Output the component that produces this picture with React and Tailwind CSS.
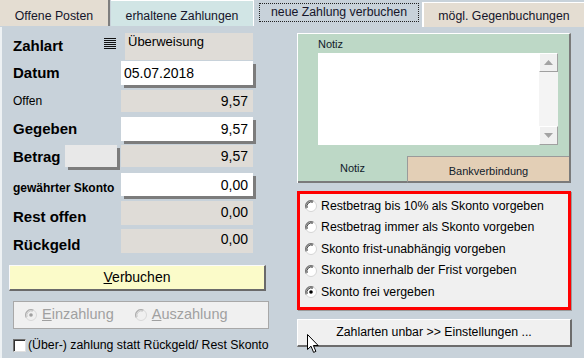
import React from 'react';

const RadioDot = ({ checked, disabled }) => (
  <svg width="12" height="12" viewBox="0 0 12 12" className="shrink-0">
    <circle cx="6" cy="6" r="5.5" fill={disabled ? '#f0f0f0' : '#ffffff'} stroke={disabled ? '#d8d8d8' : '#d4d4d4'} strokeWidth="1" />
    <path d="M1.2 8.4 A5.4 5.4 0 0 1 8.4 1.2" stroke={disabled ? '#b0b0b0' : '#7a7a7a'} strokeWidth="1.2" fill="none" />
    <path d="M2.2 7.8 A4.3 4.3 0 0 1 7.8 2.2" stroke={disabled ? '#c8c8c8' : '#303030'} strokeWidth="1" fill="none" />
    {checked && <circle cx="6" cy="6" r="1.8" fill={disabled ? '#a0a0a0' : '#000000'} />}
  </svg>
);

const ListIcon = () => (
  <svg width="12" height="12" viewBox="0 0 12 12">
    {[0.5, 2.5, 4.5, 6.5, 8.5, 10.5].map((y) => (
      <line key={y} x1="0" y1={y} x2="12" y2={y} stroke="#111" strokeWidth="1" />
    ))}
  </svg>
);

const Cursor = () => (
  <svg width="13" height="20" viewBox="0 0 13 20" className="absolute left-[307px] top-[334px]">
    <path d="M0.5 0.5 L0.5 15.5 L4 12.2 L6.6 18.4 L8.9 17.4 L6.4 11.5 L11.2 11.5 Z" fill="#fff" stroke="#000" strokeWidth="1" strokeLinejoin="round" />
  </svg>
);

const Value = ({ white, children, className = '' }) => (
  <div
    className={
      (white ? 'bg-white shadow-[3px_3px_0_#7c7c7c] ' : 'bg-[#dfdcd7] ') +
      'w-[132px] text-[14px] leading-[16px] text-black ' +
      className
    }
  >
    {children}
  </div>
);

const skontoOptions = [
  'Restbetrag bis 10% als Skonto vorgeben',
  'Restbetrag immer als Skonto vorgeben',
  'Skonto frist-unabhängig vorgeben',
  'Skonto innerhalb der Frist vorgeben',
  'Skonto frei vergeben',
];

export default function App() {
  return (
    <div className="relative w-[584px] h-[358px] overflow-hidden bg-[#c8d2da] font-['Liberation_Sans',Arial,sans-serif] text-[#111]">
      {/* tabs */}
      <div className="flex h-[27px] text-[12.3px] leading-[14px] text-[#15152a]">
        <div className="w-[110px] h-[26px] bg-[#e4ddd2] border-r-2 border-[#7e7e7e] flex justify-center pt-[9px]">
          Offene Posten
        </div>
        <div className="ml-px w-[143px] h-[26px] bg-[#d1e5e5] border-t border-r border-white flex justify-center pt-[8px]">
          erhaltene Zahlungen
        </div>
        <div className="w-[168px] pt-[3px] pl-[5px]">
          <div className="w-[160px] h-[19px] border border-dotted border-[#222] flex justify-center pt-[1px]">
            neue Zahlung verbuchen
          </div>
        </div>
        <div className="flex-1 mt-[2px] h-[25px] bg-[#e4ddd2] border-l-2 border-t border-white flex justify-center pt-[6px]">
          mögl. Gegenbuchungen
        </div>
      </div>

      <div className="flex">
        {/* left column */}
        <div className="w-[297px] h-[331px] border-l-2 border-[#eef2f4] pl-[11px] pt-[6px]">
          <div className="flex h-[27px]">
            <div className="w-[91px] pt-[4px] text-[15px] font-bold leading-[18px] text-black">Zahlart</div>
            <div className="w-[12px] pt-[5px]">
              <ListIcon />
            </div>
            <div className="ml-[9px] w-[128px] bg-[#dfdcd7] pl-[3px] pt-[1px] text-[13px] leading-[16px] text-black">
              Überweisung
            </div>
          </div>

          <div className="flex items-center h-[24px] mt-px">
            <div className="w-[108px] text-[15px] font-bold text-black">Datum</div>
            <Value white className="h-[24px] flex items-center pl-[3px] text-[14.5px]">05.07.2018</Value>
          </div>

          <div className="flex items-center h-[22px] mt-[5px]">
            <div className="w-[108px] text-[12px] text-black">Offen</div>
            <Value className="h-[22px] flex items-center justify-end pr-[5px]">9,57</Value>
          </div>

          <div className="flex items-center h-[24px] mt-[5px]">
            <div className="w-[108px] text-[15px] font-bold text-black">Gegeben</div>
            <Value white className="h-[24px] flex items-center justify-end pr-[5px]">9,57</Value>
          </div>

          <div className="flex items-start h-[22px] mt-[4px]">
            <div className="w-[52px] pt-[3px] text-[15px] font-bold leading-[18px] text-black">Betrag</div>
            <div className="w-[52px] h-[22px] bg-[#e8e8e8] shadow-[3px_3px_0_#7c7c7c]" />
            <Value className="ml-[4px] h-[22px] flex items-center justify-end pr-[5px]">9,57</Value>
          </div>

          <div className="flex items-center h-[23px] mt-[6px]">
            <div className="w-[108px] pt-[6px] text-[12px] font-bold text-black">gewährter Skonto</div>
            <Value white className="h-[23px] flex items-center justify-end pr-[5px]">0,00</Value>
          </div>

          <div className="flex items-center h-[24px] mt-[5px]">
            <div className="w-[108px] pt-[8px] text-[15px] font-bold text-black">Rest offen</div>
            <Value className="h-[24px] text-right pr-[5px] pt-[3px]">0,00</Value>
          </div>

          <div className="flex items-center h-[24px] mt-[4px]">
            <div className="w-[108px] pt-[8px] text-[15px] font-bold text-black">Rückgeld</div>
            <Value className="h-[24px] text-right pr-[5px] pt-[2px]">0,00</Value>
          </div>

          <button className="mt-[12px] -ml-[4px] w-[257px] h-[26px] bg-[#fbfbc9] border-t border-l border-[#fafafa] border-r-2 border-b-2 border-r-[#6a6a6a] border-b-[#6a6a6a] text-[14px] text-black flex items-center justify-center">
            <span>
              <span className="underline">V</span>erbuchen
            </span>
          </button>

          <div className="mt-[10px] w-[256px] h-[28px] bg-[#f0f0f0] border border-[#a8a8a8] flex items-center text-[14.5px] text-[#a0a0a0]">
            <div className="flex items-center ml-[11px] gap-[5px]">
              <RadioDot checked disabled />
              <span>
                <span className="underline">E</span>inzahlung
              </span>
            </div>
            <div className="flex items-center ml-[21px] gap-[5px]">
              <RadioDot disabled />
              <span>
                <span className="underline">A</span>uszahlung
              </span>
            </div>
          </div>

          <div className="mt-[10px] flex items-center h-[13px] gap-[2px] text-[12.3px] text-black">
            <span className="w-[13px] h-[13px] bg-white border border-t-[#707070] border-l-[#707070] border-r-[#e0e0e0] border-b-[#e0e0e0] shadow-[inset_1px_1px_0_#303030]" />
            <span>(Über-) zahlung statt Rückgeld/ Rest Skonto</span>
          </div>
        </div>

        {/* right column */}
        <div className="w-[276px] pt-[6px]">
          <div className="w-[274px] h-[150px] flex flex-col bg-[#bdd8c6] border-t border-l border-white border-r-2 border-r-[#7a7a7a]">
            <div className="pl-[20px] pt-[4px]">
              <div className="text-[11px] leading-[13px] text-[#10202a]">Notiz</div>
              <div className="mt-[2px] flex w-[240px] h-[92px] bg-white">
                <div className="flex-1" />
                <div className="w-[19px] flex flex-col bg-[#f4f4f4]">
                  <div className="h-[19px] bg-[#f0f0f0] border-t border-l border-white border-r border-b border-r-[#a0a0a0] border-b-[#a0a0a0] flex items-center justify-center">
                    <svg width="9" height="5" viewBox="0 0 9 5">
                      <path d="M0 5 L4.5 0 L9 5 Z" fill="#a3a3a3" />
                    </svg>
                  </div>
                  <div className="flex-1" />
                  <div className="h-[19px] bg-[#f0f0f0] border-t border-l border-white border-r border-b border-r-[#a0a0a0] border-b-[#a0a0a0] flex items-center justify-center">
                    <svg width="9" height="5" viewBox="0 0 9 5">
                      <path d="M0 0 L4.5 5 L9 0 Z" fill="#a3a3a3" />
                    </svg>
                  </div>
                </div>
              </div>
            </div>
            <div className="mt-auto flex h-[27px] text-[11px] leading-[13px] text-[#10202a]">
              <div className="w-[109px] border-b-2 border-[#7a7a7a] flex items-center justify-center">Notiz</div>
              <div className="flex-1 bg-[#e3cfb6] border-t border-l border-[#9a9a9a] border-b-2 border-b-[#7a7a7a] flex justify-center pt-[8px]">
                Bankverbindung
              </div>
            </div>
          </div>

          <div className="mt-[8px] w-[274px] h-[119px] bg-[#f0f0f0] border-[3px] border-[#ff0000] shadow-[1px_1px_0_#9a9a9a] text-[12.3px] text-black">
            <div className="pt-[1px]">
              {skontoOptions.map((label, i) => (
                <div key={label} className="flex items-center h-[21.6px] pl-[5px] gap-[4px]">
                  <RadioDot checked={i === 4} />
                  <span>{label}</span>
                </div>
              ))}
            </div>
          </div>

          <button className="mt-[9px] w-[275px] h-[28px] bg-[#f0f0f0] border-t border-l border-white border-r-2 border-b-2 border-r-[#6c6c6c] border-b-[#6c6c6c] text-[12.3px] text-black flex items-center justify-center">
            Zahlarten unbar &gt;&gt; Einstellungen ...
          </button>
        </div>
      </div>

      <Cursor />
    </div>
  );
}
